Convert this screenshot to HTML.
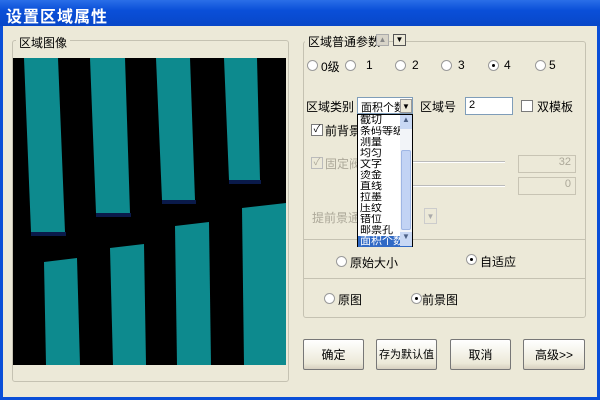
<!DOCTYPE html>
<html><head><meta charset="utf-8"><style>
*{margin:0;padding:0;box-sizing:border-box}
body{width:600px;height:400px;overflow:hidden;background:#ece9d8;font-family:"Liberation Sans","Noto Sans CJK SC","WenQuanYi Zen Hei",sans-serif;font-size:12px;color:#000;position:relative}
.a{position:absolute;white-space:nowrap}
.title{left:0;top:0;width:600px;height:26px;background:linear-gradient(#2a6ee8,#0a4fd8 40%,#0847c8);color:#fff;font-weight:bold;font-size:16px;padding:3px 6px;letter-spacing:1px}
.frame{left:0;top:26px;width:600px;height:374px;border-left:3px solid #0a4fd8;border-right:3px solid #0a4fd8;border-bottom:3px solid #0a4fd8}
.grp{border:1px solid #c5c2b2;border-radius:3px}
.lbl{background:#ece9d8;padding:0 3px}
.radio{width:11px;height:11px;border-radius:50%;border:1px solid #9a9a9a;background:#fff}
.radio.on::after{content:"";position:absolute;left:3px;top:3px;width:3px;height:3px;border-radius:50%;background:#000}
.chk{width:12px;height:12px;border:1px solid #7a7a7a;background:#fff;font-size:10px;line-height:10px;text-align:center}
.edit{background:#fff;border:1px solid #7f9db9;font-size:11px;padding:1px 3px}
.btn{border:1px solid #777;border-radius:2px;background:linear-gradient(#fff,#ece9d8 80%,#d6d0c0);text-align:center;line-height:30px;font-size:12px}
.dis{color:#aca899}
.list div{height:11px;line-height:11px;font-size:11px;padding-left:2px;white-space:nowrap;overflow:hidden}
</style></head><body>
<div class="a title">设置区域属性</div>
<div class="a frame"></div>
<div class="a grp" style="left:12px;top:40px;width:277px;height:342px"></div>
<div class="a lbl" style="left:16px;top:34px">区域图像</div>
<svg class="a" style="left:13px;top:58px" width="273" height="307" viewBox="13 58 273 307">
<rect x="13" y="58" width="273" height="307" fill="#000"/>
<g fill="#0d8a8e">
<polygon points="24,58 58,58 65,232 31,232"/>
<polygon points="90,58 125,58 130,213 96,213"/>
<polygon points="156,58 190,58 195,200 162,200"/>
<polygon points="224,58 257,58 260,180 229,180"/>
<polygon points="44,262 77,258 80,365 46,365"/>
<polygon points="110,248 144,244 146,365 113,365"/>
<polygon points="175,226 209,222 211,365 177,365"/>
<polygon points="242,208 286,203 286,365 244,365"/>
</g>
<g fill="#0a1a4a"><rect x="31" y="232" width="35" height="4"/><rect x="96" y="213" width="35" height="4"/><rect x="162" y="200" width="34" height="4"/><rect x="229" y="180" width="32" height="4"/></g>
</svg>
<div class="a grp" style="left:303px;top:41px;width:283px;height:277px"></div>
<div class="a lbl" style="left:305px;top:33px">区域普通参数</div>
<div class="a" style="left:376px;top:34px;width:13px;height:12px;background:#d8d4c8;border:1px solid #aaa;font-size:8px;text-align:center;color:#888">▲</div>
<div class="a" style="left:393px;top:34px;width:13px;height:12px;background:#ece9d8;border:1px solid #555;font-size:8px;text-align:center">▼</div>
<div class="a radio" style="left:307px;top:60px"></div><div class="a" style="left:321px;top:58px">0级</div>
<div class="a radio" style="left:345px;top:60px"></div><div class="a" style="left:366px;top:58px">1</div>
<div class="a radio" style="left:395px;top:60px"></div><div class="a" style="left:412px;top:58px">2</div>
<div class="a radio" style="left:441px;top:60px"></div><div class="a" style="left:458px;top:58px">3</div>
<div class="a radio on" style="left:488px;top:60px"></div><div class="a" style="left:504px;top:58px">4</div>
<div class="a radio" style="left:535px;top:60px"></div><div class="a" style="left:549px;top:58px">5</div>
<div class="a" style="left:306px;top:98px">区域类别</div>
<div class="a edit" style="left:357px;top:97px;width:56px;height:17px;padding-top:1px;overflow:hidden">面积个数</div>
<div class="a" style="left:400px;top:99px;width:12px;height:14px;background:#ece9d8;border:1px solid #999;font-size:8px;text-align:center;line-height:13px">▼</div>
<div class="a" style="left:420px;top:98px">区域号</div>
<div class="a edit" style="left:465px;top:97px;width:48px;height:18px">2</div>
<div class="a chk" style="left:521px;top:100px"></div><div class="a" style="left:537px;top:98px">双模板</div>
<div class="a chk" style="left:311px;top:124px">✓</div><div class="a" style="left:325px;top:122px">前背景</div>
<div class="a chk dis" style="left:311px;top:157px;background:#ece9d8;border-color:#bbb">✓</div><div class="a dis" style="left:325px;top:155px">固定阀</div>
<div class="a" style="left:413px;top:161px;width:92px;height:2px;background:#bbb;border-bottom:1px solid #fff"></div>
<div class="a" style="left:413px;top:185px;width:92px;height:2px;background:#bbb;border-bottom:1px solid #fff"></div>
<div class="a dis" style="left:518px;top:155px;width:58px;height:18px;border:1px solid #c8c4b4;text-align:right;padding-right:4px;font-size:11px">32</div>
<div class="a dis" style="left:518px;top:177px;width:58px;height:18px;border:1px solid #c8c4b4;text-align:right;padding-right:4px;font-size:11px">0</div>
<div class="a dis" style="left:312px;top:209px">提前景通</div>
<div class="a" style="left:424px;top:208px;width:13px;height:16px;border:1px solid #ccc;font-size:8px;color:#aaa;text-align:center;line-height:15px">▼</div>
<div class="a" style="left:304px;top:239px;width:281px;height:1px;background:#c5c2b2"></div>
<div class="a" style="left:304px;top:278px;width:281px;height:1px;background:#c5c2b2"></div>
<div class="a radio" style="left:336px;top:256px"></div><div class="a" style="left:350px;top:254px">原始大小</div>
<div class="a radio on" style="left:466px;top:254px"></div><div class="a" style="left:480px;top:253px">自适应</div>
<div class="a radio" style="left:324px;top:293px"></div><div class="a" style="left:338px;top:291px">原图</div>
<div class="a radio on" style="left:411px;top:293px"></div><div class="a" style="left:422px;top:291px">前景图</div>
<div class="a list" style="left:357px;top:114px;width:56px;height:133px;background:#fff;border:1px solid #000">
<div>截切</div><div>条码等级</div><div>测量</div><div>均匀</div><div>文字</div><div>烫金</div><div>直线</div><div>拉墨</div><div>压纹</div><div>错位</div><div>邮票孔</div><div style="background:#316ac5;color:#fff">面积个数</div>
</div>
<div class="a" style="left:400px;top:115px;width:12px;height:131px;background:#f2f4f8"></div>
<div class="a" style="left:400px;top:115px;width:12px;height:14px;background:#c8d8f4;font-size:8px;text-align:center;color:#4d6185">▲</div>
<div class="a" style="left:401px;top:150px;width:10px;height:80px;background:#c2d3f4;border:1px solid #9fb6e4;border-radius:2px"></div>
<div class="a" style="left:400px;top:232px;width:12px;height:14px;background:#c8d8f4;font-size:8px;text-align:center;color:#4d6185">▼</div>
<div class="a btn" style="left:303px;top:339px;width:61px;height:31px">确定</div>
<div class="a btn" style="left:376px;top:339px;width:61px;height:31px;font-size:11px">存为默认值</div>
<div class="a btn" style="left:450px;top:339px;width:61px;height:31px">取消</div>
<div class="a btn" style="left:523px;top:339px;width:62px;height:31px">高级&gt;&gt;</div>
</body></html>
